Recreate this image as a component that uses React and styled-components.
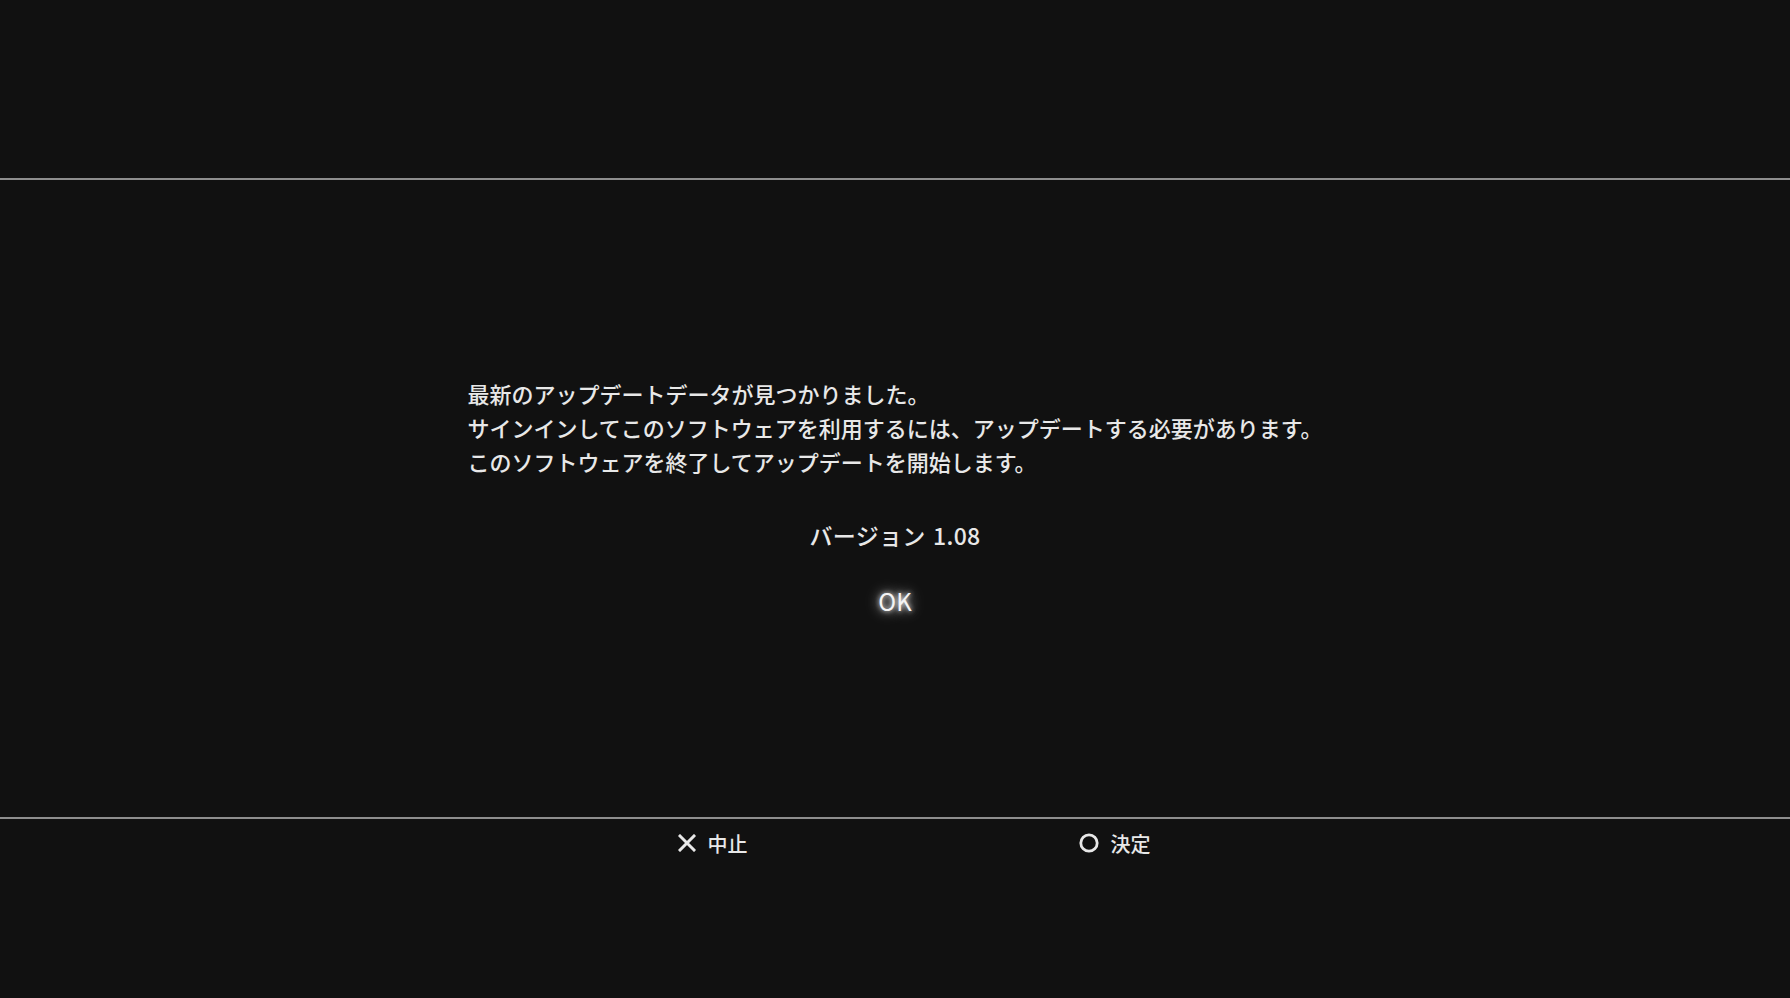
import React from "react"
import styled, { createGlobalStyle } from "styled-components"

const GlobalStyle = createGlobalStyle`
  html, body {
    margin: 0;
    padding: 0;
    background: #111111;
  }
  body {
    font-family: "Noto Sans CJK JP", "Noto Sans", sans-serif;
    color: #e6e6e6;
    -webkit-font-smoothing: antialiased;
  }
`

const Screen = styled.div`
  width: 1790px;
  height: 998px;
  display: flex;
  flex-direction: column;
  background: #111111;
  overflow: hidden;
`

const TopBand = styled.div`
  height: 178px;
  flex: none;
`

const Rule = styled.div`
  height: 2px;
  flex: none;
  background: #8e8e8e;
`

const Body = styled.div`
  height: 637px;
  flex: none;
  display: flex;
  flex-direction: column;
  align-items: center;
  padding-top: 196px;
  box-sizing: border-box;
`

const Message = styled.p`
  margin: 0;
  font-size: 22px;
  font-weight: 500;
  line-height: 34px;
  letter-spacing: 0;
  text-align: left;
  color: #e8e8e8;
`

const Version = styled.div`
  margin-top: 40px;
  font-size: 23px;
  font-weight: 500;
  line-height: 34px;
  letter-spacing: 0.3px;
  word-spacing: 2px;
  color: #e8e8e8;
`

const OkButton = styled.div`
  margin-top: 33px;
  font-size: 24px;
  font-weight: 400;
  line-height: 32px;
  color: #f4f4f4;
  text-shadow: 0 0 5px rgba(255, 255, 255, 0.9), 0 0 12px rgba(255, 255, 255, 0.7),
    0 0 20px rgba(255, 255, 255, 0.35);
`

const Footer = styled.div`
  flex: 1;
  display: flex;
  justify-content: center;
  gap: 331px;
  padding-left: 38px;
  padding-top: 6px;
`

const Hint = styled.div`
  display: flex;
  align-items: center;
  gap: 12px;
  height: 36px;
  font-size: 20px;
  font-weight: 500;
  color: #e8e8e8;
`

const CrossIcon = () => (
  <svg width="18" height="18" viewBox="0 0 18 18">
    <path d="M2 2 L16 16 M16 2 L2 16" stroke="#e8e8e8" strokeWidth="3" strokeLinecap="square" />
  </svg>
)

const CircleIcon = () => (
  <svg width="20" height="20" viewBox="0 0 20 20">
    <circle cx="10" cy="10" r="8.2" fill="none" stroke="#e8e8e8" strokeWidth="2.8" />
  </svg>
)

const App = () => {
  return (
    <Screen>
      <GlobalStyle />
      <TopBand />
      <Rule />
      <Body>
        <Message>
          最新のアップデートデータが見つかりました。
          <br />
          サインインしてこのソフトウェアを利用するには、アップデートする必要があります。
          <br />
          このソフトウェアを終了してアップデートを開始します。
        </Message>
        <Version>バージョン 1.08</Version>
        <OkButton>OK</OkButton>
      </Body>
      <Rule />
      <Footer>
        <Hint>
          <CrossIcon />
          中止
        </Hint>
        <Hint>
          <CircleIcon />
          決定
        </Hint>
      </Footer>
    </Screen>
  )
}

export default App
